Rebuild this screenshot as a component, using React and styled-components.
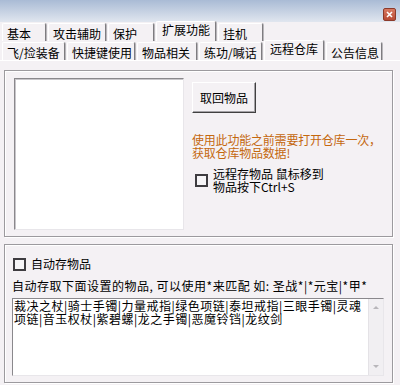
import React from 'react';
import styled, { createGlobalStyle } from 'styled-components';

const GlobalStyle = createGlobalStyle`
  html, body {
    margin: 0;
    padding: 0;
    background: #f4f1f4;
  }
  body {
    font-family: "Noto Sans CJK SC", "Noto Sans", sans-serif;
    font-size: 12px;
    color: #000;
  }
`;

const Window = styled.div`
  width: 400px;
  height: 385px;
  overflow: hidden;
  display: flex;
  flex-direction: column;
  background: #f4f1f4;
`;

const TitleBar = styled.div`
  height: 22px;
  flex-shrink: 0;
  background: linear-gradient(#a9bbd5, #e0e6ef);
  display: flex;
  justify-content: flex-end;
  align-items: flex-start;
  padding: 8px 4px 0 0;
  box-sizing: border-box;
`;

const CloseButton = styled.div`
  width: 13px;
  height: 13px;
  box-sizing: border-box;
  border: 1px solid #8c3a2a;
  border-radius: 2px;
  background: linear-gradient(#d87a62, #b84a34);
  display: flex;
  align-items: center;
  justify-content: center;
`;

const TabRow = styled.div`
  height: 19px;
  flex-shrink: 0;
  display: flex;
  align-items: flex-end;
  padding-left: ${(p) => p.$indent}px;
  gap: 2px;
`;

const Tab = styled.div`
  position: relative;
  z-index: ${(p) => (p.$active ? 1 : 0)};
  width: ${(p) => p.$w}px;
  height: ${(p) => (p.$active ? 20 : 18)}px;
  box-sizing: border-box;
  padding: ${(p) => (p.$active ? '1px 0 0 5px' : '3px 0 0 4px')};
  line-height: 13px;
  white-space: nowrap;
  background: #f4f1f4;
  border-top: 1px solid #ffffff;
  border-left: 1px solid #ffffff;
  border-right: 1px solid #7e7c80;
  box-shadow: 1px 0 0 #b8b6ba;
  border-radius: 2px 2px 0 0;
`;

const Page = styled.div`
  flex: 1;
  border-top: 1px solid #ffffff;
  padding: 9px 0 0 4px;
  display: flex;
  flex-direction: column;
  gap: 7px;
`;

const GroupBox = styled.div`
  width: 389px;
  height: ${(p) => p.$h}px;
  box-sizing: border-box;
  border: 1px solid #9c9a9e;
  box-shadow: inset 1px 1px 0 #ffffff, 1px 1px 0 #ffffff;
`;

const TopGroup = styled(GroupBox)`
  display: flex;
  padding: 7px 0 0 9px;
  gap: 8px;
`;

const ListBox = styled.div`
  width: 172px;
  height: 152px;
  box-sizing: border-box;
  background: #ffffff;
  border: 1px solid;
  border-color: #8a888c #e8e6ea #e8e6ea #8a888c;
  box-shadow: inset 1px 1px 0 #c8c6ca;
`;

const SideColumn = styled.div`
  display: flex;
  flex-direction: column;
  padding-top: 4px;
`;

const Button = styled.div`
  width: 64px;
  height: 31px;
  box-sizing: border-box;
  display: flex;
  align-items: center;
  justify-content: center;
  background: #f4f1f4;
  border: 1px solid;
  border-color: #ffffff #404040 #404040 #ffffff;
  box-shadow: inset -1px -1px 0 #a4a2a6;
`;

const Notice = styled.div`
  margin-top: 20px;
  color: #c4680e;
  line-height: 13px;
  width: 200px;
  letter-spacing: -0.2px;
`;

const CheckRow = styled.label`
  display: flex;
  align-items: center;
  gap: 5px;
  margin-top: ${(p) => p.$top}px;
  margin-left: ${(p) => p.$left}px;
  line-height: ${(p) => (p.$multi ? 13 : 14)}px;
`;

const CheckBox = styled.span`
  width: 13px;
  height: 13px;
  flex-shrink: 0;
  box-sizing: border-box;
  border: 2px solid #3e3c40;
  background: #f6f5f7;
`;

const BottomGroup = styled(GroupBox)`
  padding: 12px 0 0 7px;
  display: flex;
  flex-direction: column;
`;

const Hint = styled.div`
  margin-top: 8px;
  line-height: 14px;
  white-space: nowrap;
  letter-spacing: 0.5px;
`;

const EditBox = styled.div`
  margin-top: 5px;
  width: 372px;
  height: 78px;
  box-sizing: border-box;
  background: #ffffff;
  border: 1px solid;
  border-color: #8a888c #e8e6ea #e8e6ea #8a888c;
  display: flex;
`;

const EditText = styled.div`
  flex: 1;
  padding: 0 0 0 1px;
  line-height: 13px;
  white-space: nowrap;
  letter-spacing: 0.5px;
`;

const ScrollBar = styled.div`
  width: 15px;
  background: #f1eff2;
  border-left: 1px solid #e4e2e6;
  display: flex;
  flex-direction: column;
  justify-content: space-between;
  align-items: center;
  padding: 7px 0 7px;
  box-sizing: border-box;
`;

const Arrow = styled.span`
  width: 0;
  height: 0;
  border-left: 3px solid transparent;
  border-right: 3px solid transparent;
  ${(p) => (p.$up ? 'border-bottom: 3px solid #b8b6ba;' : 'border-top: 3px solid #b8b6ba;')}
`;

const outerTabs = [
  { label: '基本', w: 44 },
  { label: '攻击辅助', w: 58 },
  { label: '保护', w: 46 },
  { label: '扩展功能', w: 60, active: true },
  { label: '挂机', w: 45 },
];

const innerTabs = [
  { label: '飞/捡装备', w: 63 },
  { label: '快捷键使用', w: 68 },
  { label: '物品相关', w: 60 },
  { label: '练功/喊话', w: 63 },
  { label: '远程仓库', w: 60, active: true },
  { label: '公告信息', w: 56 },
];

const App = () => {
  return (
    <Window>
      <GlobalStyle />
      <TitleBar>
        <CloseButton>
          <svg width="7" height="7" viewBox="0 0 7 7">
            <path d="M1 1L6 6M6 1L1 6" stroke="#fff" strokeWidth="1.6" />
          </svg>
        </CloseButton>
      </TitleBar>
      <TabRow $indent={2}>
        {outerTabs.map((t) => (
          <Tab key={t.label} $w={t.w} $active={t.active}>
            {t.label}
          </Tab>
        ))}
      </TabRow>
      <TabRow $indent={2}>
        {innerTabs.map((t) => (
          <Tab key={t.label} $w={t.w} $active={t.active}>
            {t.label}
          </Tab>
        ))}
      </TabRow>
      <Page>
        <TopGroup $h={167}>
          <ListBox />
          <SideColumn>
            <Button>取回物品</Button>
            <Notice>
              使用此功能之前需要打开仓库一次，
              <br />
              获取仓库物品数据!
            </Notice>
            <CheckRow $multi $top={8} $left={3}>
              <CheckBox />
              <span>
                远程存物品 鼠标移到
                <br />
                物品按下Ctrl+S
              </span>
            </CheckRow>
          </SideColumn>
        </TopGroup>
        <BottomGroup $h={139}>
          <CheckRow $top={0} $left={1}>
            <CheckBox />
            <span>自动存物品</span>
          </CheckRow>
          <Hint>自动存取下面设置的物品, 可以使用*来匹配 如: 圣战*|*元宝|*甲*</Hint>
          <EditBox>
            <EditText>
              裁决之杖|骑士手镯|力量戒指|绿色项链|泰坦戒指|三眼手镯|灵魂
              <br />
              项链|音玉权杖|紫碧螺|龙之手镯|恶魔铃铛|龙纹剑
            </EditText>
            <ScrollBar>
              <Arrow $up />
              <Arrow />
            </ScrollBar>
          </EditBox>
        </BottomGroup>
      </Page>
    </Window>
  );
};

export default App;
